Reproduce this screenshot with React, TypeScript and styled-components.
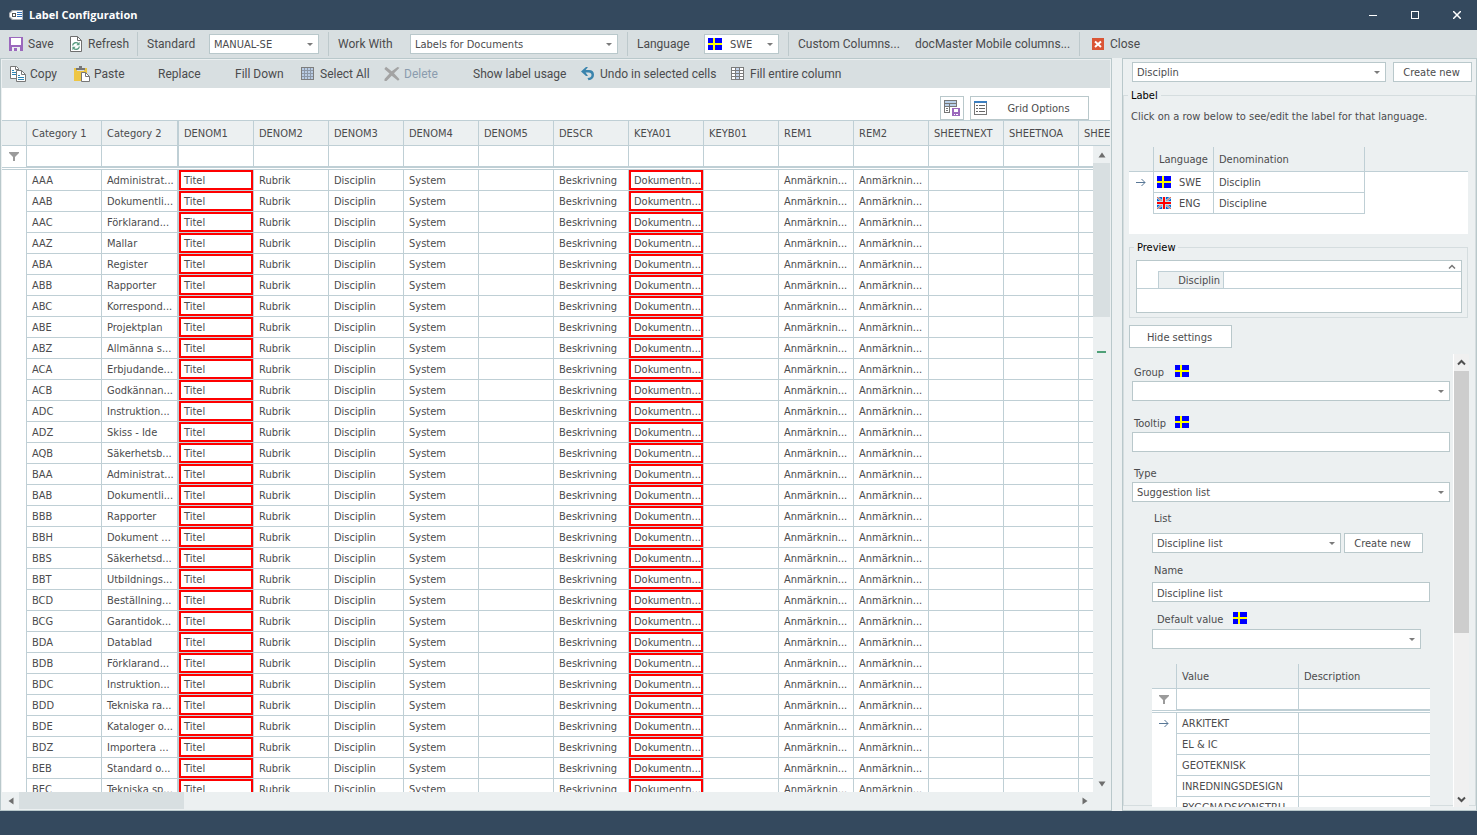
import React from "react";
import styled, { createGlobalStyle, css } from "styled-components";

const navy = "#34495e";
const bar = "#d8dfe1";
const panel = "#ecf0f1";
const edge = "#b9c8cb";
const line = "#bfcfd5";
const ink = "#4b4b4d";
const titleFont = `"Open Sans", "Noto Sans", sans-serif`;
const uiFont = `Roboto, "Liberation Sans", sans-serif`;
const gridFont = `"DejaVu Sans Condensed", "DejaVu Sans", sans-serif`;

const GlobalStyle = createGlobalStyle`
  *, *::before, *::after { box-sizing: border-box; }
  body { margin: 0; background: ${navy}; }
  button, input, select { font: inherit; color: inherit; margin: 0; border-radius: 0; }
`;

const Window = styled.div`
  display: flex;
  flex-direction: column;
  height: 100vh;
  overflow: hidden;
  background: ${panel};
  color: ${ink};
  font: 11px/14px ${gridFont};
`;

const TitleBar = styled.header`
  display: flex;
  align-items: center;
  height: 30px;
  flex: none;
  padding-left: 8px;
  background: ${navy};
  color: #fff;
`;

const Title = styled.h1`
  flex: 1;
  margin: 0 0 0 5px;
  font: 700 11px/16px ${titleFont};
`;

const WindowButton = styled.button`
  display: flex;
  align-items: center;
  justify-content: center;
  width: 42px;
  height: 30px;
  padding: 0;
  border: 0;
  background: none;
  &:last-child { width: 41px; }
`;

const TopBar = styled.div`
  display: flex;
  align-items: center;
  flex: none;
  height: 28px;
  padding-left: 8px;
  background: ${bar};
  font: 12px/16px ${uiFont};
`;

const GridBar = styled(TopBar)``;

const Tool = styled.button<{ $width: number; $inset?: number }>`
  display: flex;
  align-items: center;
  gap: 4px;
  flex: none;
  width: ${(p) => p.$width}px;
  height: 24px;
  padding: 0 0 0 ${(p) => p.$inset ?? 0}px;
  border: 0;
  background: none;
  white-space: nowrap;
  &:disabled { color: #8b9cae; }
`;

const ToolLabel = styled.label<{ $width: number }>`
  flex: none;
  width: ${(p) => p.$width}px;
  padding-left: 9px;
  white-space: nowrap;
`;

const Divider = styled.span<{ $gap?: number }>`
  flex: none;
  width: 1px;
  height: 24px;
  margin-left: ${(p) => p.$gap ?? 0}px;
  background: #bdc9cc;
`;

const ComboBox = styled.span<{ $width?: number }>`
  position: relative;
  display: flex;
  flex: ${(p) => (p.$width ? "none" : "1")};
  width: ${(p) => (p.$width ? `${p.$width}px` : "auto")};
  height: 20px;
  font: 11px/14px ${gridFont};
`;

const NativeSelect = styled.select<{ $inset?: number }>`
  appearance: none;
  width: 100%;
  height: 20px;
  padding: 2px 20px 0 ${(p) => p.$inset ?? 4}px;
  border: 1px solid ${edge};
  background: #fff;
`;

const ComboArrow = styled.svg`
  position: absolute;
  right: 6px;
  top: 9px;
  pointer-events: none;
`;

const ComboFlag = styled.span`
  position: absolute;
  left: 4px;
  top: 4px;
  display: flex;
  pointer-events: none;
`;

const Workspace = styled.main`
  display: flex;
  flex: 1;
  min-height: 0;
  gap: 10px;
`;

const GridPanel = styled.section`
  display: flex;
  flex-direction: column;
  flex: 1;
  min-width: 0;
  padding: 1px;
  border: 1px solid ${edge};
`;

const OptionsBar = styled.div`
  display: flex;
  justify-content: flex-end;
  align-items: flex-end;
  flex: none;
  gap: 6px;
  height: 32px;
  padding-right: 21px;
  background: #fff;
`;

const PushButton = styled.button<{ $width: number; $height?: number }>`
  flex: none;
  width: ${(p) => p.$width}px;
  height: ${(p) => p.$height ?? 20}px;
  padding: 2px 2px 0 0;
  border: 1px solid ${edge};
  background: #fff;
  text-align: center;
`;

const IconPushButton = styled(PushButton)`
  display: flex;
  align-items: center;
  padding: 0 3px;
`;

const ButtonText = styled.span`
  flex: 1;
  padding: 2px 0 0 4px;
  text-align: center;
`;

const GridArea = styled.div`
  position: relative;
  flex: 1;
  min-height: 0;
  overflow: hidden;
  background: #fff;
`;

const Table = styled.table`
  table-layout: fixed;
  width: 100%;
  border-collapse: separate;
  border-spacing: 0;
`;

const WideTable = styled(Table)`
  width: 1152px;
`;

const Head = styled.th<{ $top?: boolean; $thick?: boolean; $open?: boolean }>`
  height: ${(p) => (p.$top ? 26 : 25)}px;
  padding: 2px 0 0 5px;
  border: 0 solid ${line};
  border-top-width: ${(p) => (p.$top ? 1 : 0)}px;
  border-bottom-width: 1px;
  border-right-width: ${(p) => (p.$open ? 0 : p.$thick ? 2 : 1)}px;
  background: ${panel};
  font-weight: 400;
  text-align: left;
  white-space: nowrap;
  overflow: hidden;
`;

const Cell = styled.td<{ $thick?: boolean; $open?: boolean; $marked?: boolean; $plain?: boolean }>`
  height: 21px;
  padding: 2px 0 0 5px;
  border: 0 solid ${line};
  border-bottom-width: ${(p) => (p.$plain ? 0 : 1)}px;
  border-right-width: ${(p) => (p.$open ? 0 : p.$thick ? 2 : 1)}px;
  background: #fff;
  white-space: nowrap;
  overflow: hidden;
  ${(p) => p.$marked && css`box-shadow: inset 0 0 0 2px #f00;`}
`;

const Marker = styled(Cell)`
  padding: 0;
  border-bottom-width: 0;
  text-align: center;
  svg { display: block; margin: 0 auto; }
`;

const Rule = styled.td`
  height: 3px;
  padding: 0;
  border: solid ${line};
  border-width: 1px 0;
  background: #fff;
`;

const LanguageCell = styled.span`
  display: flex;
  align-items: center;
  gap: 8px;
  margin-left: -2px;
  svg { margin-bottom: 2px; }
`;

const VerticalScroll = styled.div`
  position: absolute;
  right: 0;
  top: 26px;
  bottom: 0;
  width: 17px;
  display: flex;
  flex-direction: column;
  background: ${panel};
`;

const ScrollArrow = styled.button<{ $narrow?: boolean }>`
  display: flex;
  align-items: center;
  justify-content: center;
  flex: none;
  width: ${(p) => (p.$narrow ? 15 : 17)}px;
  height: 17px;
  padding: 0;
  border: 0;
  background: none;
`;

const Track = styled.div`
  flex: 1;
  position: relative;
  min-height: 0;
`;

const GridThumb = styled.div`
  height: 154px;
  background: ${bar};
`;

const FoundMark = styled.div`
  height: 2px;
  margin: 34px 4px 0;
  background: #4fa078;
`;

const HorizontalScroll = styled.div`
  display: flex;
  flex: none;
  height: 17px;
  padding-right: 17px;
`;

const HorizontalThumb = styled.div`
  width: 165px;
  height: 17px;
  background: ${bar};
`;

const SidePanel = styled.aside`
  display: flex;
  flex-direction: column;
  flex: none;
  width: 355px;
  border: 1px solid ${edge};
`;

const PickRow = styled.div`
  display: flex;
  flex: none;
  gap: 7px;
  padding: 3px 4px 0 9px;
`;

const Group = styled.fieldset`
  display: flex;
  flex-direction: column;
  flex: 1;
  min-width: 0;
  min-height: 0;
  margin: 6px 0 4px;
  padding: 0;
  border: 1px solid #d5dddf;
`;

const Legend = styled.legend`
  margin-left: 4px;
  padding: 2px 3px 0;
  line-height: 12px;
  color: #000;
`;

const Hint = styled.p`
  flex: none;
  margin: 8px 0 23px 7px;
`;

const LanguageBox = styled.div`
  flex: none;
  height: 87px;
  margin: 0 7px 0 5px;
  background: #fff;
`;

const Preview = styled.fieldset`
  flex: none;
  min-width: 0;
  margin: 6px 7px 0 5px;
  padding: 6px 5px 4px 6px;
  border: 1px solid #d5dddf;
`;

const PreviewLegend = styled(Legend)`
  margin-left: -2px;
`;

const PreviewBox = styled.div`
  height: 53px;
  border: 1px solid ${edge};
  background: #fff;
`;

const PreviewTop = styled.div`
  display: flex;
  justify-content: flex-end;
  align-items: center;
  height: 10px;
  padding-right: 5px;
`;

const PreviewLine = styled.div`
  height: 18px;
  padding-left: 21px;
  border-bottom: 1px solid ${line};
`;

const PreviewStrip = styled.div`
  display: flex;
  height: 17px;
  border: 1px solid ${line};
  border-width: 1px 0 0 1px;
`;

const PreviewTag = styled.span`
  width: 65px;
  padding: 2px 3px 0 0;
  border-right: 1px solid ${line};
  background: ${panel};
  text-align: right;
`;

const HideButton = styled(PushButton)`
  margin: 7px 0 6px 5px;
`;

const Settings = styled.div`
  display: flex;
  flex: 1;
  min-height: 0;
  margin: 0 6px -2px 0;
  overflow: hidden;
`;

const Form = styled.form`
  flex: 1;
  min-width: 0;
  padding: 0 3px 0 8px;
  overflow: hidden;
`;

const Indented = styled.div`
  margin: 0 20px;
`;

const Caption = styled.div<{ $above: number; $below: number }>`
  display: flex;
  align-items: flex-start;
  height: 16px;
  margin: ${(p) => p.$above}px 0 ${(p) => p.$below}px;
  svg { margin-top: 1px; }
`;

const CaptionText = styled.label<{ $width?: number; $inset?: number }>`
  width: ${(p) => (p.$width ? `${p.$width}px` : "auto")};
  padding-top: 2px;
  padding-left: ${(p) => p.$inset ?? 2}px;
`;

const TextBox = styled.input`
  display: block;
  width: 100%;
  height: 20px;
  padding: 2px 4px 0;
  border: 1px solid ${edge};
  background: #fff;
`;

const FieldRow = styled.div`
  display: flex;
  gap: 3px;
`;

const ValueTable = styled(Table)`
  margin-top: 15px;
`;

const SettingsScroll = styled.div`
  display: flex;
  flex-direction: column;
  flex: none;
  width: 16px;
  border-left: 1px solid #fff;
  background: #f0f0f0;
`;

const SettingsThumb = styled.div`
  height: 262px;
  background: #cdcdcd;
`;

const StatusBar = styled.footer`
  flex: none;
  height: 24px;
  background: ${navy};
`;

const sharp = { shapeRendering: "crispEdges" as const };

const SwedishFlag = () => (
  <svg width="14" height="12" viewBox="0 0 14 12" {...sharp}>
    <path fill="#00f" d="M0 0h14v12H0z" />
    <path fill="#ff0" d="M5 0h2v12H5zM0 5h14v2H0z" />
  </svg>
);

const BritishFlag = () => (
  <svg width="14" height="12" viewBox="0 0 14 12">
    <path fill="#0a62d0" d="M0 0h14v12H0z" />
    <path stroke="#a5dcf5" strokeWidth="2.4" d="M0 0l14 12M14 0L0 12" />
    <path stroke="#e8604a" strokeWidth="1" d="M0 0l14 12M14 0L0 12" />
    <path fill="#bfe4f7" d="M5 0h4v12H5zM0 4h14v4H0z" />
    <path fill="#f00" d="M6 0h2v12H6zM0 5h14v2H0z" />
  </svg>
);

const LabelIcon = () => (
  <svg width="16" height="16" viewBox="0 0 16 16">
    <path fill="#a9adb3" d="M4 3h11v10H4L1 10V6z" />
    <path fill="#fff" d="M5 4h9v8H5L2 9.500v-3z" />
    <path fill="#555" d="M4 6h4v4H4z" />
    <path fill="#fff" d="M5 7h2v2H5z" />
    <path fill="#2f6fb8" d="M9 5h5v1H9zM9 7h5v1H9zM9 9h5v1H9z" />
  </svg>
);

const SaveIcon = () => (
  <svg width="16" height="16" viewBox="0 0 16 16" {...sharp}>
    <path fill="#9b68bd" d="M1 1h14v14H1z" />
    <path fill="#fff" d="M3 2h10v7H3z" />
    <path fill="#e9eef0" d="M4 11h8v4H4z" />
    <path fill="#9b68bd" d="M6 12h3v3H6z" />
  </svg>
);

const RefreshIcon = () => (
  <svg width="16" height="16" viewBox="0 0 16 16" fill="none">
    <path fill="#fff" stroke="#6f6f6f" d="M2.500.5h7l4 4v11h-11z" />
    <path stroke="#6f6f6f" d="M9.500.5v4h4" />
    <path stroke="#5b9c80" strokeWidth="1.400" d="M4.600 9.500A3.400 3.400 0 0 1 10.500 7.800M11.400 10.500A3.400 3.400 0 0 1 5.500 12.200" />
    <path fill="#5b9c80" d="M11.600 5.800v3.400H8.300zM4.400 14.200v-3.400h3.300z" />
  </svg>
);

const CopyIcon = () => (
  <svg width="16" height="16" viewBox="0 0 16 16" fill="none">
    <path fill="#fff" stroke="#777" d="M.5.5h6l2 2v10h-8z" />
    <path stroke="#777" d="M5.500.5v3h3" />
    <path stroke="#2e86b5" d="M2 4.500h2M2 6.500h4M2 8.500h4" />
    <path fill="#fff" stroke="#777" d="M6.500 4.500h5l4 4v7h-9z" />
    <path stroke="#777" d="M11.500 4.500v4h4" />
    <path stroke="#2e86b5" d="M8 9.500h2M8 11.500h6M8 13.500h6" />
  </svg>
);

const PasteIcon = () => (
  <svg width="16" height="16" viewBox="0 0 16 16" fill="none">
    <path fill="#eec643" d="M0 2h13v13H0z" />
    <path fill="#d8dfe1" d="M3 2h7v3H3z" />
    <path fill="#777" d="M5 0h3v2h3v2H2V2h3z" />
    <path fill="#fff" stroke="#777" d="M7.500 6.500h4l4 4v5h-8z" />
    <path stroke="#777" d="M11.500 6.500v4h4" />
  </svg>
);

const SelectAllIcon = () => (
  <svg width="16" height="16" viewBox="0 0 16 16" {...sharp}>
    <path fill="#7d7d7d" d="M1 1h13v13H1z" />
    <path fill="#b9cce4" d="M2 2h11v11H2z" />
    <path fill="#8c97a6" d="M4 2h1v11H4zM7 2h1v11H7zM10 2h1v11h-1zM2 4h11v1H2zM2 7h11v1H2zM2 10h11v1H2z" />
  </svg>
);

const DeleteIcon = () => (
  <svg width="16" height="16" viewBox="0 0 16 16">
    <path fill="#a3a3a3" d="M2 .8l5.700 4.500L13.500 1l2 .8-5.500 5.500 5.500 6-1.500 1.500-6.300-5-5.200 5.200H.5v-2l5-5.500L.3 3z" />
  </svg>
);

const UndoIcon = () => (
  <svg width="16" height="16" viewBox="0 0 16 16">
    <path fill="#3a84ad" d="M1 5.500L6 1h2L5.600 4H9c3.300 0 5 2 5 4.800C14 12 12 14 8.500 14.300L7.500 12c2.600 0 4-1.200 4-3 0-1.600-1-2.500-3-2.500H5.600L8 10H6z" />
  </svg>
);

const FillColumnIcon = () => (
  <svg width="16" height="16" viewBox="0 0 16 16" {...sharp}>
    <path fill="#7b7b7b" d="M1 1h13v13H1z" />
    <path fill="#fff" d="M2 2h3v2H2zM2 5h3v2H2zM2 8h3v2H2zM2 11h3v2H2zM10 2h3v2h-3zM10 5h3v2h-3zM10 8h3v2h-3zM10 11h3v2h-3z" />
    <path fill="#c3d3ea" d="M6 2h3v2H6zM6 5h3v2H6zM6 8h3v2H6zM6 11h3v2H6z" />
  </svg>
);

const CloseIcon = () => (
  <svg width="16" height="16" viewBox="0 0 16 16">
    <path fill="#da5535" d="M2 2h12v12H2z" />
    <path stroke="#fff" strokeWidth="2" d="M5 5.500l6 5.500M11 5.500L5 11" />
  </svg>
);

const SaveLayoutIcon = () => (
  <svg width="16" height="16" viewBox="0 0 16 16" {...sharp}>
    <path fill="#777" d="M0 0h13v7H6v6H0z" />
    <path fill="#b8cfe8" d="M1 1h11v2H1z" />
    <path fill="#b8cfe8" d="M1 4h4v2H1zM6 4h6v2H6z" />
    <path fill="#fff" d="M1 7h4v5H1z" />
    <path fill="#777" d="M2 8h2v1H2zM2 10h2v1H2z" />
    <path fill="#9b68bd" d="M8 8h8v8H8z" />
    <path fill="#fff" d="M10 9h4v3h-4zM10 14h1v1h-1zM12 14h2v1h-2z" />
  </svg>
);

const OptionsIcon = () => (
  <svg width="14" height="14" viewBox="0 0 14 14" {...sharp}>
    <path fill="#777" d="M0 0h13v14H0z" />
    <path fill="#fff" d="M1 2h11v11H1z" />
    <path fill="#3c7fc0" d="M0 0h13v2H0z" />
    <path fill="#666" d="M2 4h2v1H2zM2 7h2v1H2zM2 10h2v1H2zM5 4h6v1H5zM5 7h6v1H5zM5 10h6v1H5z" />
  </svg>
);

const FilterIcon = () => (
  <svg width="10" height="9" viewBox="0 0 10 9">
    <path fill="#9b9b9b" d="M0 0h10v1L6 5v4H4V5L0 1z" />
  </svg>
);

const RowArrow = () => (
  <svg width="10" height="9" viewBox="0 0 10 9" fill="none" stroke="#587796">
    <path d="M0 4.500h9M5.500 1L9 4.500 5.500 8" />
  </svg>
);

const Triangle = ({ turn }: { turn: number }) => (
  <svg width="8" height="8" viewBox="0 0 8 8">
    <path fill="#6e6e6e" d="M4 1.500L7.500 6.500h-7z" transform={`rotate(${turn} 4 4)`} />
  </svg>
);

const Chevron = ({ turn }: { turn: number }) => (
  <svg width="9" height="8" viewBox="0 0 9 8" fill="none">
    <path stroke="#505050" strokeWidth="2" d="M1 5.500L4.500 2 8 5.500" transform={`rotate(${turn} 4.500 4)`} />
  </svg>
);

type ComboProps = {
  id?: string;
  label?: string;
  value: string;
  width?: number;
  flag?: boolean;
};

function Combo({ id, label, value, width, flag }: ComboProps) {
  return (
    <ComboBox $width={width}>
      <NativeSelect id={id} aria-label={label} defaultValue={value} $inset={flag ? 25 : undefined}>
        <option value={value}>{value}</option>
      </NativeSelect>
      {flag && <ComboFlag><SwedishFlag /></ComboFlag>}
      <ComboArrow width="6" height="3" viewBox="0 0 6 3"><path fill="#7b7b7b" d="M0 0h6L3 3z" /></ComboArrow>
    </ComboBox>
  );
}

const columns = [
  "Category 1", "Category 2", "DENOM1", "DENOM2", "DENOM3", "DENOM4", "DENOM5", "DESCR",
  "KEYA01", "KEYB01", "REM1", "REM2", "SHEETNEXT", "SHEETNOA", "SHEETNOB",
];

const labels = [
  "Titel", "Rubrik", "Disciplin", "System", "", "Beskrivning",
  "Dokumentn...", "", "Anmärknin...", "Anmärknin...", "", "", "",
];

const marked = new Set([0, 6]);

const categories: [string, string][] = [
  ["AAA", "Administrat..."], ["AAB", "Dokumentli..."], ["AAC", "Förklarand..."], ["AAZ", "Mallar"],
  ["ABA", "Register"], ["ABB", "Rapporter"], ["ABC", "Korrespond..."], ["ABE", "Projektplan"],
  ["ABZ", "Allmänna s..."], ["ACA", "Erbjudande..."], ["ACB", "Godkännan..."], ["ADC", "Instruktion..."],
  ["ADZ", "Skiss - Ide"], ["AQB", "Säkerhetsb..."], ["BAA", "Administrat..."], ["BAB", "Dokumentli..."],
  ["BBB", "Rapporter"], ["BBH", "Dokument ..."], ["BBS", "Säkerhetsd..."], ["BBT", "Utbildnings..."],
  ["BCD", "Beställning..."], ["BCG", "Garantidok..."], ["BDA", "Datablad"], ["BDB", "Förklarand..."],
  ["BDC", "Instruktion..."], ["BDD", "Tekniska ra..."], ["BDE", "Kataloger o..."], ["BDZ", "Importera ..."],
  ["BEB", "Standard o..."], ["BEC", "Tekniska sp..."],
];

const values = ["ARKITEKT", "EL & IC", "GEOTEKNISK", "INREDNINGSDESIGN", "BYGGNADSKONSTRU..."];

function LabelGrid() {
  return (
    <GridArea>
      <WideTable>
        <colgroup>
          <col style={{ width: 25 }} />
          {columns.map((name, i) => <col key={name} style={{ width: i === 1 ? 77 : 75 }} />)}
        </colgroup>
        <thead>
          <tr>
            <Head $top />
            {columns.map((name, i) => <Head key={name} $top $thick={i === 1}>{name}</Head>)}
          </tr>
        </thead>
        <tbody>
          <tr>
            <Marker><FilterIcon /></Marker>
            {columns.map((name, i) => <Cell key={name} $thick={i === 1} />)}
          </tr>
          <tr><Rule colSpan={columns.length + 1} /></tr>
          {categories.map(([code, text]) => (
            <tr key={code}>
              <Marker />
              <Cell>{code}</Cell>
              <Cell $thick>{text}</Cell>
              {labels.map((label, i) => <Cell key={i} $marked={marked.has(i)}>{label}</Cell>)}
            </tr>
          ))}
        </tbody>
      </WideTable>
      <VerticalScroll>
        <ScrollArrow aria-label="Scroll up"><Triangle turn={0} /></ScrollArrow>
        <Track>
          <GridThumb />
          <FoundMark />
        </Track>
        <ScrollArrow aria-label="Scroll down"><Triangle turn={180} /></ScrollArrow>
      </VerticalScroll>
    </GridArea>
  );
}

function LanguageTable() {
  return (
    <LanguageBox>
      <Table>
        <colgroup>
          <col style={{ width: 25 }} />
          <col style={{ width: 60 }} />
          <col style={{ width: 151 }} />
          <col />
        </colgroup>
        <thead>
          <tr><Head /><Head>Language</Head><Head>Denomination</Head><Head $open /></tr>
        </thead>
        <tbody>
          <tr>
            <Marker><RowArrow /></Marker>
            <Cell><LanguageCell><SwedishFlag />SWE</LanguageCell></Cell>
            <Cell>Disciplin</Cell>
            <Cell $open $plain />
          </tr>
          <tr>
            <Marker />
            <Cell><LanguageCell><BritishFlag />ENG</LanguageCell></Cell>
            <Cell>Discipline</Cell>
            <Cell $open $plain />
          </tr>
        </tbody>
      </Table>
    </LanguageBox>
  );
}

function SettingsForm() {
  return (
    <Form onSubmit={(e) => e.preventDefault()}>
      <Caption $above={10} $below={1}>
        <CaptionText htmlFor="group" $width={43}>Group</CaptionText><SwedishFlag />
      </Caption>
      <Combo id="group" value="" />
      <Caption $above={14} $below={1}>
        <CaptionText htmlFor="tooltip" $width={43}>Tooltip</CaptionText><SwedishFlag />
      </Caption>
      <TextBox id="tooltip" />
      <Caption $above={13} $below={1}>
        <CaptionText htmlFor="type">Type</CaptionText>
      </Caption>
      <Combo id="type" value="Suggestion list" />
      <Indented>
        <Caption $above={8} $below={7}>
          <CaptionText htmlFor="list">List</CaptionText>
        </Caption>
        <FieldRow>
          <Combo id="list" value="Discipline list" width={189} />
          <PushButton type="button" $width={79}>Create new</PushButton>
        </FieldRow>
        <Caption $above={9} $below={4}>
          <CaptionText htmlFor="name">Name</CaptionText>
        </Caption>
        <TextBox id="name" defaultValue="Discipline list" />
        <Caption $above={9} $below={2}>
          <CaptionText htmlFor="default" $width={81} $inset={5}>Default value</CaptionText><SwedishFlag />
        </Caption>
        <Combo id="default" value="" width={269} />
        <ValueTable>
          <colgroup>
            <col style={{ width: 25 }} />
            <col style={{ width: 122 }} />
            <col />
          </colgroup>
          <thead>
            <tr><Head /><Head>Value</Head><Head $open>Description</Head></tr>
          </thead>
          <tbody>
            <tr><Marker><FilterIcon /></Marker><Cell /><Cell $open /></tr>
            <tr><Rule colSpan={3} /></tr>
            {values.map((value, i) => (
              <tr key={value}>
                <Marker>{i === 0 && <RowArrow />}</Marker>
                <Cell>{value}</Cell>
                <Cell $open />
              </tr>
            ))}
          </tbody>
        </ValueTable>
      </Indented>
    </Form>
  );
}

export default function App() {
  return (
    <Window>
      <GlobalStyle />
      <TitleBar>
        <LabelIcon />
        <Title>Label Configuration</Title>
        <WindowButton aria-label="Minimize">
          <svg width="8" height="8" {...sharp}><path fill="#fff" d="M0 4h8v1H0z" /></svg>
        </WindowButton>
        <WindowButton aria-label="Maximize">
          <svg width="8" height="8" fill="none" {...sharp}><path stroke="#fff" d="M.5.5h7v7h-7z" /></svg>
        </WindowButton>
        <WindowButton aria-label="Close window">
          <svg width="8" height="8"><path stroke="#fff" strokeWidth="1.500" d="M0 0l8 8M8 0L0 8" /></svg>
        </WindowButton>
      </TitleBar>

      <TopBar role="toolbar" aria-label="Configuration">
        <Tool $width={60}><SaveIcon />Save</Tool>
        <Tool $width={69}><RefreshIcon />Refresh</Tool>
        <Divider />
        <ToolLabel htmlFor="standard" $width={71}>Standard</ToolLabel>
        <Combo id="standard" value="MANUAL-SE" width={110} />
        <Divider $gap={9} />
        <ToolLabel htmlFor="work" $width={81}>Work With</ToolLabel>
        <Combo id="work" value="Labels for Documents" width={208} />
        <Divider $gap={9} />
        <ToolLabel htmlFor="language" $width={76}>Language</ToolLabel>
        <Combo id="language" value="SWE" width={75} flag />
        <Divider $gap={9} />
        <Tool $width={126} $inset={9}>Custom Columns...</Tool>
        <Tool $width={164}>docMaster Mobile columns...</Tool>
        <Divider />
        <Tool $width={70} $inset={10}><CloseIcon />Close</Tool>
      </TopBar>

      <Workspace>
        <GridPanel>
          <GridBar role="toolbar" aria-label="Grid">
            <Tool $width={64}><CopyIcon />Copy</Tool>
            <Tool $width={84}><PasteIcon />Paste</Tool>
            <Tool $width={77}>Replace</Tool>
            <Tool $width={65}>Fill Down</Tool>
            <Tool $width={84}><SelectAllIcon />Select All</Tool>
            <Tool $width={89} disabled><DeleteIcon />Delete</Tool>
            <Tool $width={107}>Show label usage</Tool>
            <Tool $width={150}><UndoIcon />Undo in selected cells</Tool>
            <Tool $width={120}><FillColumnIcon />Fill entire column</Tool>
          </GridBar>
          <OptionsBar>
            <IconPushButton $width={24} $height={24} aria-label="Save layout"><SaveLayoutIcon /></IconPushButton>
            <IconPushButton $width={119} $height={24}><OptionsIcon /><ButtonText>Grid Options</ButtonText></IconPushButton>
          </OptionsBar>
          <LabelGrid />
          <HorizontalScroll>
            <ScrollArrow aria-label="Scroll left"><Triangle turn={270} /></ScrollArrow>
            <Track><HorizontalThumb /></Track>
            <ScrollArrow aria-label="Scroll right"><Triangle turn={90} /></ScrollArrow>
          </HorizontalScroll>
        </GridPanel>

        <SidePanel>
          <PickRow>
            <Combo label="Label" value="Disciplin" />
            <PushButton $width={79}>Create new</PushButton>
          </PickRow>
          <Group>
            <Legend>Label</Legend>
            <Hint>Click on a row below to see/edit the label for that language.</Hint>
            <LanguageTable />
            <Preview>
              <PreviewLegend>Preview</PreviewLegend>
              <PreviewBox>
                <PreviewTop>
                  <svg width="8" height="5"><path stroke="#777" strokeWidth="1.500" fill="none" d="M1 4.500l3-3 3 3" /></svg>
                </PreviewTop>
                <PreviewLine>
                  <PreviewStrip><PreviewTag>Disciplin</PreviewTag></PreviewStrip>
                </PreviewLine>
              </PreviewBox>
            </Preview>
            <HideButton $width={103} $height={23}>Hide settings</HideButton>
            <Settings>
              <SettingsForm />
              <SettingsScroll>
                <ScrollArrow $narrow aria-label="Scroll settings up"><Chevron turn={0} /></ScrollArrow>
                <Track><SettingsThumb /></Track>
                <ScrollArrow $narrow aria-label="Scroll settings down"><Chevron turn={180} /></ScrollArrow>
              </SettingsScroll>
            </Settings>
          </Group>
        </SidePanel>
      </Workspace>
      <StatusBar />
    </Window>
  );
}
